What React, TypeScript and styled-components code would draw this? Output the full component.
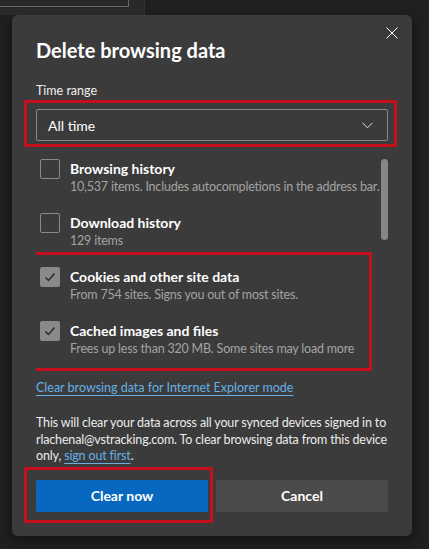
import styled, { createGlobalStyle } from 'styled-components';

const GlobalStyle = createGlobalStyle`
  html, body {
    margin: 0;
    padding: 0;
  }
  body {
    width: 429px;
    height: 549px;
    overflow: hidden;
    background: #202020;
    font-family: Lato, 'Open Sans', sans-serif;
    color: #ffffff;
  }
`;

const TopStrip = styled.div`
  display: flex;
  height: 15px;
`;

const PaneEdge = styled.div`
  width: 144px;
  height: 15px;
  background: #292929;
  border-right: 1px solid #333333;
`;

const PaneBox = styled.div`
  width: 128px;
  height: 6px;
  border-right: 1px solid #686868;
  border-bottom: 1px solid #686868;
`;

const DialogRow = styled.div`
  padding-left: 12px;
`;

const Dialog = styled.div`
  width: 400px;
  box-sizing: border-box;
  padding: 0 24px 24px;
  background: #3b3b3b;
  border-radius: 6px;
  box-shadow: 0 4px 14px rgba(0, 0, 0, 0.45);
`;

const Header = styled.div`
  display: flex;
  justify-content: space-between;
  align-items: flex-start;
`;

const Title = styled.h2`
  margin: 22px 0 0;
  font-size: 20px;
  line-height: 26px;
  font-weight: 700;
`;

const CloseButton = styled.button`
  margin: 12px -10px 0 0;
  padding: 0;
  width: 12px;
  height: 12px;
  border: none;
  background: none;
  display: flex;
`;

const Label = styled.div`
  margin-top: 19px;
  font-size: 12.5px;
  line-height: 18px;
  color: #f0f0f0;
`;

const Highlight = styled.div<{ $inset: string }>`
  position: relative;

  &::after {
    content: '';
    position: absolute;
    inset: ${({ $inset }) => $inset};
    border: 3px solid #c4101a;
    pointer-events: none;
  }
`;

const SelectBox = styled.div`
  height: 32px;
  box-sizing: border-box;
  border: 1px solid #8a8a8a;
  border-radius: 2px;
  display: flex;
  align-items: center;
  justify-content: space-between;
  padding: 0 14px 0 11px;
  font-size: 14px;
`;

const List = styled.div`
  display: flex;
  margin-top: 9px;
  padding-top: 9px;
  height: 216px;
  overflow: hidden;
`;

const Items = styled.div`
  flex: 1;
  padding-left: 4px;
  min-width: 0;
`;

const Row = styled.div`
  display: flex;
  gap: 10px;
  height: 54px;
`;

const Box = styled.div<{ $checked?: boolean }>`
  flex: none;
  width: 20px;
  height: 20px;
  box-sizing: border-box;
  border-radius: 2px;
  border: 1px solid #8a8a8a;
  background: ${({ $checked }) => ($checked ? '#8a8a8a' : 'transparent')};
  display: flex;
  align-items: center;
  justify-content: center;
`;

const RowText = styled.div`
  white-space: nowrap;
`;

const RowTitle = styled.div`
  font-size: 14px;
  font-weight: 700;
  line-height: 18px;
  margin-top: 1px;
`;

const RowSub = styled.div`
  font-size: 12.5px;
  letter-spacing: -0.2px;
  line-height: 17px;
  color: #a3a3a3;
`;

const ScrollTrack = styled.div`
  width: 7px;
  flex: none;
`;

const Thumb = styled.div`
  height: 81px;
  border-radius: 4px;
  background: #878787;
`;

const Link = styled.a`
  display: inline-block;
  margin-top: 4px;
  font-size: 12.5px;
  line-height: 18px;
  color: #66b0e6;
  text-decoration: underline;
  text-underline-offset: 3px;
`;

const Note = styled.p`
  margin: 18px 0 0;
  font-size: 12.5px;
  letter-spacing: -0.15px;
  line-height: 16.5px;
  white-space: nowrap;
  color: #ececec;

  a {
    color: #66b0e6;
    text-decoration: underline;
    text-underline-offset: 3px;
  }
`;

const Buttons = styled.div`
  display: grid;
  grid-template-columns: 1fr 1fr;
  gap: 8px;
  margin-top: 15px;
`;

const Button = styled.button<{ $primary?: boolean }>`
  width: 100%;
  height: 32px;
  border: none;
  border-radius: 2px;
  background: ${({ $primary }) => ($primary ? '#0868c0' : '#4b4b4b')};
  color: #ffffff;
  font-family: inherit;
  font-size: 14px;
  font-weight: 700;
`;

const CheckIcon = () => (
  <svg width="12" height="12" viewBox="0 0 12 12" fill="none">
    <path d="M1.5 6.5 L4.5 9.5 L10.5 2.5" stroke="#2b2b2b" strokeWidth="1.5" />
  </svg>
);

const items = [
  { title: 'Browsing history', sub: '10,537 items. Includes autocompletions in the address bar.', checked: false },
  { title: 'Download history', sub: '129 items', checked: false },
];

const checkedItems = [
  { title: 'Cookies and other site data', sub: 'From 754 sites. Signs you out of most sites.', checked: true },
  { title: 'Cached images and files', sub: 'Frees up less than 320 MB. Some sites may load more', checked: true },
];

const ItemRow = ({ title, sub, checked }: { title: string; sub: string; checked: boolean }) => (
  <Row>
    <Box $checked={checked}>{checked && <CheckIcon />}</Box>
    <RowText>
      <RowTitle>{title}</RowTitle>
      <RowSub>{sub}</RowSub>
    </RowText>
  </Row>
);

export default function App() {
  return (
    <>
      <GlobalStyle />
      <TopStrip>
        <PaneEdge>
          <PaneBox />
        </PaneEdge>
      </TopStrip>
      <DialogRow>
        <Dialog>
          <Header>
            <Title>Delete browsing data</Title>
            <CloseButton aria-label="Close">
              <svg width="12" height="12" viewBox="0 0 12 12">
                <path d="M0.5 0.5 L11.5 11.5 M11.5 0.5 L0.5 11.5" stroke="#ffffff" strokeWidth="1" />
              </svg>
            </CloseButton>
          </Header>
          <Label>Time range</Label>
          <Highlight $inset="-9px -9px -6px -12px" style={{ marginTop: 9 }}>
            <SelectBox>
              <span>All time</span>
              <svg width="11" height="7" viewBox="0 0 11 7">
                <path d="M0.5 0.8 L5.5 5.8 L10.5 0.8" stroke="#e0e0e0" strokeWidth="1" fill="none" />
              </svg>
            </SelectBox>
          </Highlight>
          <List>
            <Items>
              {items.map((it) => (
                <ItemRow key={it.title} {...it} />
              ))}
              <Highlight $inset="-15px 9px 4px -24px">
                {checkedItems.map((it) => (
                  <ItemRow key={it.title} {...it} />
                ))}
              </Highlight>
            </Items>
            <ScrollTrack>
              <Thumb />
            </ScrollTrack>
          </List>
          <Link href="#">Clear browsing data for Internet Explorer mode</Link>
          <Note>
            This will clear your data across all your synced devices signed in to
            <br />
            rlachenal@vstracking.com. To clear browsing data from this device
            <br />
            only, <a href="#">sign out first</a>.
          </Note>
          <Buttons>
            <Highlight $inset="-13px -5px -11px -12px">
              <Button $primary>Clear now</Button>
            </Highlight>
            <Button>Cancel</Button>
          </Buttons>
        </Dialog>
      </DialogRow>
    </>
  );
}
